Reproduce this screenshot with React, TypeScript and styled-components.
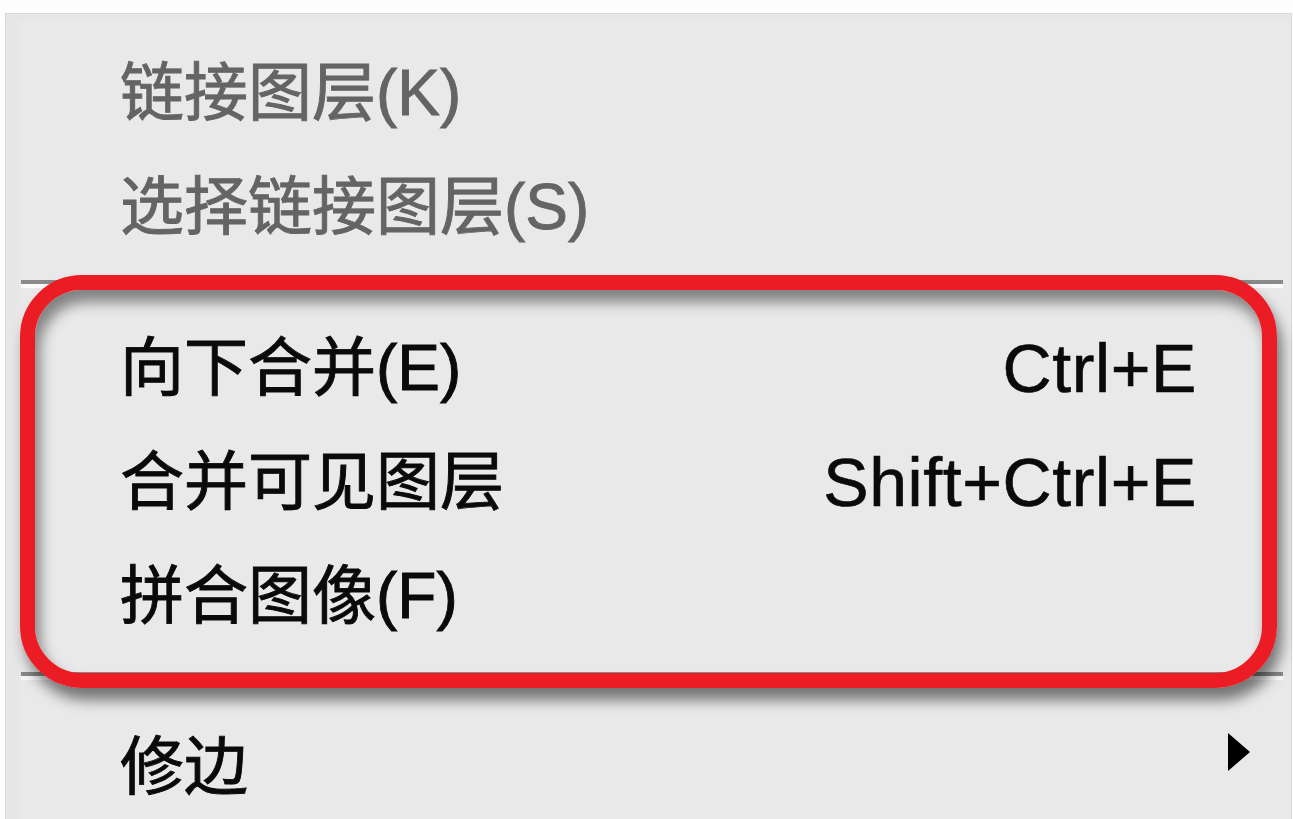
import React from "react";
import styled, { createGlobalStyle } from "styled-components";

const Global = createGlobalStyle`
  html, body {
    margin: 0;
    padding: 0;
    background: #fdfdfd;
    height: 819px;
    overflow: hidden;
  }
  #root { height: 819px; overflow: hidden; }
`;

const Menu = styled.div`
  margin: 13px 0 0 5px;
  width: 1287px;
  box-sizing: border-box;
  background: #e9e9e9;
  border: 1px solid #d9d9d9;
  border-bottom: none;
  box-shadow: inset 0 7px 0 -1px #e6e6e6, inset 14px 0 0 -1px #e7e7e7;
  padding-top: 22px;
  display: flex;
  flex-direction: column;
`;

const Row = styled.div<{ $disabled?: boolean }>`
  height: 114px;
  display: flex;
  align-items: center;
  padding: 0 41px 0 114px;
  color: ${(p) => (p.$disabled ? "#646464" : "#0a0a0a")};
`;

const Label = styled.span`
  flex: 1;
  font-family: "Liberation Sans", "Noto Sans CJK SC", sans-serif;
  font-size: 64px;
  line-height: 1;
  white-space: nowrap;
  -webkit-text-stroke: 0.9px currentColor;
`;

const Shortcut = styled.span`
  font-family: "Liberation Sans", sans-serif;
  font-size: 68px;
  letter-spacing: 0.6px;
  line-height: 1;
  margin-right: 53px;
  white-space: nowrap;
  -webkit-text-stroke: 0.6px currentColor;
`;

const ArrowCell = styled.span`
  width: 53px;
  margin-left: -53px;
  display: flex;
  justify-content: flex-end;
  align-self: center;
  margin-top: -30px;
`;

const Separator = styled.div<{ $top: number; $height: number }>`
  height: ${(p) => p.$height}px;
  padding: ${(p) => p.$top}px 8px 0 15px;
  box-sizing: border-box;
  &::before {
    content: "";
    display: block;
    height: 4px;
    background: #8a8a8a;
    border-bottom: 4px solid #fafafa;
  }
`;

const Highlight = styled.div`
  position: relative;
  display: flex;
  flex-direction: column;
  &::after {
    content: "";
    position: absolute;
    top: 11px;
    bottom: 22px;
    left: 14px;
    right: 14px;
    border: 15px solid #ec1c24;
    border-radius: 62px;
    box-shadow: 5px 12px 14px rgba(0, 0, 0, 0.5),
      inset 5px 12px 14px rgba(0, 0, 0, 0.45);
    pointer-events: none;
  }
`;

const SubArrow = () => (
  <svg width="22" height="38" viewBox="0 0 22 38">
    <polygon points="0,0 22,19 0,38" fill="#000" />
  </svg>
);

export default function App() {
  return (
    <>
      <Global />
      <Menu>
        <Row $disabled>
          <Label>链接图层(K)</Label>
        </Row>
        <Row $disabled>
          <Label>选择链接图层(S)</Label>
        </Row>
        <Highlight>
          <Separator $top={16} $height={47} />
          <Row>
            <Label>向下合并(E)</Label>
            <Shortcut>Ctrl+E</Shortcut>
          </Row>
          <Row>
            <Label>合并可见图层</Label>
            <Shortcut>Shift+Ctrl+E</Shortcut>
          </Row>
          <Row>
            <Label>拼合图像(F)</Label>
          </Row>
          <Separator $top={19} $height={57} />
        </Highlight>
        <Row>
          <Label>修边</Label>
          <ArrowCell>
            <SubArrow />
          </ArrowCell>
        </Row>
      </Menu>
    </>
  );
}
